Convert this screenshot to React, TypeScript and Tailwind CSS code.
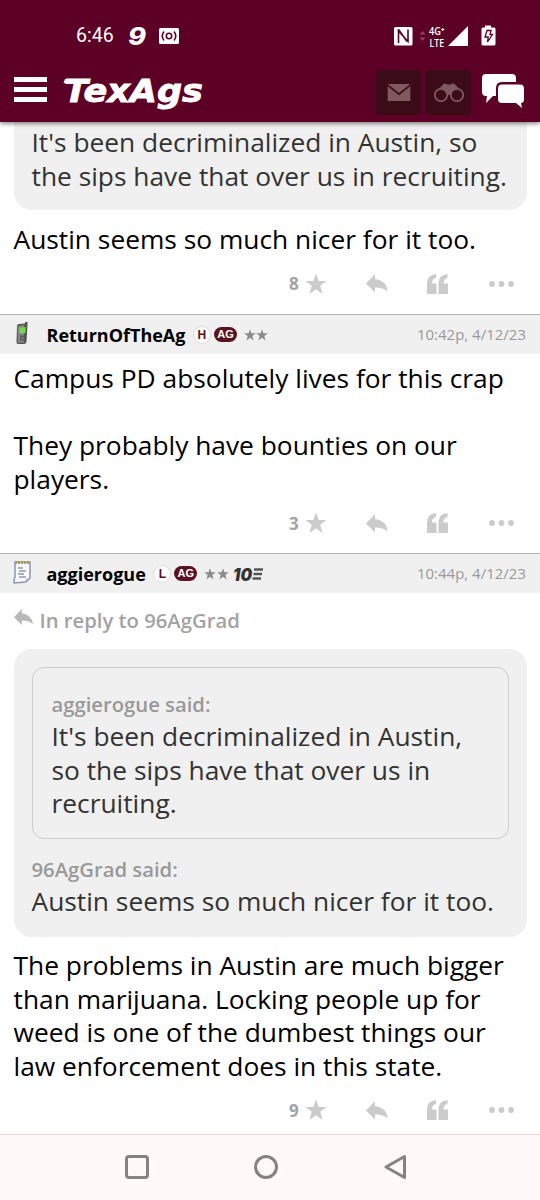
import type { ReactNode } from "react";

const postText = "text-[26.33px] leading-[33.5px] whitespace-nowrap";

function StatusBar() {
  return (
    <div className="flex h-[72px] items-center pl-[76px] pr-[44px] text-white">
      <span className="w-[53px] font-[Roboto] text-[19.5px] leading-none">6:46</span>
      <svg className="overflow-visible" width="20" height="30" viewBox="0 0 20 30">
        <text x="-1" y="23.5" fontSize="24" fontWeight="800" fontStyle="italic" fontFamily="Inter, sans-serif" fill="#fff" textLength="18" lengthAdjust="spacingAndGlyphs">9</text>
      </svg>
      <svg className="ml-[10px]" width="20" height="16" viewBox="0 0 20 16" fill="none" stroke="#5d0025" strokeWidth="1.6">
        <rect width="20" height="16" rx="1.5" fill="#fff" stroke="none" />
        <circle cx="10" cy="8" r="2.7" />
        <path d="M5 3.5Q1.4 8 5 12.5M15 3.5Q18.6 8 15 12.5" />
      </svg>
      <svg className="ml-auto overflow-visible" width="102" height="22" viewBox="0 0 102 22" fill="#fff">
        <rect x="0" y="2" width="18.5" height="18.5" rx="1.5" />
        <path d="M4.500 18V6L14 16.500V4.500M3.500 5H5L13 16.500" fill="none" stroke="#5d0025" strokeWidth="1.600" />
        <path d="M25.5 9.5L28.5 6L31.5 9.5ZM25.5 12.5L28.5 16L31.5 12.5Z" fill="#904060" />
        <text x="35" y="10" fontSize="10.5" fontWeight="600" fontFamily="Open Sans, sans-serif" textLength="12" lengthAdjust="spacingAndGlyphs">4G</text>
        <path d="M47.300 4.500H50.300M48.800 3V6" stroke="#fff" strokeWidth="1" />
        <text x="35.5" y="21.5" fontSize="10.5" fontWeight="600" fontFamily="Open Sans, sans-serif" textLength="14.5" lengthAdjust="spacingAndGlyphs">LTE</text>
        <path d="M54 21L74 1V21Z" />
        <path d="M87.500 4q0-1.500 1.500-1.500H91V.5h6v2h3q1.500 0 1.500 1.500V19q0 1.500-1.500 1.500H89Q87.500 20.500 87.500 19Z" />
        <path d="M93 5.500H97L96 9.500H98.500L93.500 17L94.200 12H91Z" fill="none" stroke="#5d0025" strokeWidth="1.300" />
      </svg>
    </div>
  );
}

function Header() {
  return (
    <header className="relative z-10 h-[122px] bg-[#5d0025] shadow-[0_1px_5px_rgba(0,0,0,0.6)]">
      <StatusBar />
      <div className="-mt-[2px] flex items-start pl-[14px] pr-[15px]">
        <div className="mt-[7px] flex w-[33px] flex-col gap-[5.5px]">
          <span className="h-[4.500px] bg-white" />
          <span className="h-[4.500px] bg-white" />
          <span className="h-[4.500px] bg-white" />
        </div>
        <svg className="ml-[15px]" width="145" height="44" viewBox="0 0 145 44">
          <text x="2" y="31.5" fontSize="31.5" fontWeight="700" fontStyle="italic" fontFamily="DejaVu Sans, sans-serif" fill="#fff" stroke="#fff" strokeWidth="0.800" textLength="139" lengthAdjust="spacingAndGlyphs">TexAgs</text>
          <path d="M3 9L1.500 13H4.500L6 9ZM26 9L25 14H22L23 9Z" fill="#fff" />
        </svg>
        <div className="ml-auto flex gap-[5px]">
          <div className="flex size-[45px] items-center justify-center rounded bg-[#3b0b18]">
            <svg width="24" height="17" viewBox="0 0 24 18" fill="#80595f">
              <path d="M0 0H24L12 9.500Z" />
              <path d="M0 2.500L12 12L24 2.500V18H0Z" />
            </svg>
          </div>
          <div className="flex size-[45px] items-center justify-center rounded bg-[#3b0b18]">
            <svg width="30" height="20" viewBox="0 0 30 20" fill="#80595f">
              <path d="M2 9L9 1.500Q11-.5 13 1.500H17Q19-.5 21 1.500L28 9L24 18L17 12H13L6 18Z" />
              <circle cx="7" cy="12" r="6.200" fill="#3b0b18" stroke="#80595f" strokeWidth="1.700" />
              <circle cx="23" cy="12" r="6.200" fill="#3b0b18" stroke="#80595f" strokeWidth="1.700" />
            </svg>
          </div>
        </div>
        <svg className="ml-[10px] mt-[3px]" width="44" height="36" viewBox="0 0 44 36" fill="#fff">
          <path d="M5 1H31Q35 1 35 5V9H21Q15 9 15 15V23H12L5 30L6 23H5Q1 23 1 19V5Q1 1 5 1Z" />
          <path d="M21 11.500H39Q43 11.500 43 15.500V26Q43 30 40 30L41 35L35 30H21Q17 30 17 26V15.500Q17 11.500 21 11.500Z" />
        </svg>
      </div>
    </header>
  );
}

function ReplyArrow({ width = 22 }: { width?: number }) {
  return (
    <svg width={width} height={(width * 19) / 22} viewBox="0 0 22 19" fill="currentColor">
      <path d="M0 9.500L9 0V5Q20 6 22 17.500Q16 13 9 13.500V18.500Z" />
    </svg>
  );
}

function Star({ size }: { size: number }) {
  return (
    <svg width={size} height={size} viewBox="0 0 22 22" fill="currentColor">
      <path d="M11 .5L13.600 8H21.500L15.200 12.700L17.600 21L11 16.200L4.400 21L6.800 12.700L.5 8H8.400Z" />
    </svg>
  );
}

function Actions({ count }: { count: number }) {
  return (
    <div className="flex h-[22px] items-center pl-[289px] text-[#cbcbcb]">
      <span className="w-[16px] text-[17px] leading-none font-bold text-[#a3a3a3]">{count}</span>
      <Star size={22} />
      <span className="ml-[39px]"><ReplyArrow /></span>
      <svg className="ml-[39px]" width="22" height="20" viewBox="0 0 22 20" fill="currentColor">
        <path d="M9 0V4Q5 4.500 5 9.500H9.500V20H0V9Q0 1 9 0ZM20.500 0V4Q16.500 4.500 16.500 9.500H21V20H11.500V9Q11.500 1 20.500 0Z" />
      </svg>
      <svg className="ml-[40px]" width="26" height="6" viewBox="0 0 26 6" fill="currentColor">
        <circle cx="3" cy="3" r="2.900" />
        <circle cx="12.500" cy="3" r="2.900" />
        <circle cx="22" cy="3" r="2.900" />
      </svg>
    </div>
  );
}

function PhoneIcon() {
  return (
    <svg width="20" height="24" viewBox="0 0 20 24">
      <path d="M4 5Q4 3 6 3L12 2.500V1H14.500V3L13.500 21Q13 23 11 23H5Q3.500 23 3.500 21Z" fill="#555" />
      <path d="M4.500 5L11 4V21.500L5 22Z" fill="#858585" />
      <path d="M6.500 6.500L12.500 6V12L6.500 12.500Z" fill="#72dc50" />
      <path d="M7 15.500H11.500M7 18.500H11.500" stroke="#555" strokeWidth="2" strokeDasharray="2 .5" />
    </svg>
  );
}

function NotepadIcon() {
  return (
    <svg width="20" height="24" viewBox="0 0 20 24">
      <path d="M2 2H17V18L13 22L1 23V20L2 17Z" fill="#f8faff" stroke="#8b93ba" strokeWidth="1.500" />
      <path d="M2 2.500H17" stroke="#b09a58" strokeWidth="3" strokeDasharray="2 1" />
      <path d="M5 8H10M6 11H13M5 14H11M6 17H13" stroke="#8c9da0" strokeWidth="1.300" />
      <path d="M12 23L13 19L17 18Z" fill="#aaa" />
    </svg>
  );
}

type PostHeaderProps = {
  icon: ReactNode;
  name: string;
  letter: string;
  time: string;
  ten?: boolean;
};

function PostHeader({ icon, name, letter, time, ten }: PostHeaderProps) {
  return (
    <div className="flex h-10 items-center border-t border-[#b3b3b3] bg-[#f0f0f0] pl-[13px] pr-[14px]">
      <span className="w-[33.5px] -mt-[4px]">{icon}</span>
      <span className="text-[18px] leading-none font-bold text-black">{name}</span>
      <span className="ml-[7.5px] flex size-[18px] items-center justify-center rounded-full border border-[#ddd] bg-white font-[Liberation_Sans] text-[12px] leading-none font-bold text-[#5b1220]">
        {letter}
      </span>
      <span className="ml-[3px] flex h-[15px] w-[23px] items-center justify-center rounded-full bg-[#5b1220] font-[Liberation_Sans] text-[11px] leading-none font-bold text-white">
        AG
      </span>
      <span className="ml-[7px] flex gap-[0.5px] text-[#8b8b8b]">
        <Star size={12} />
        <Star size={12} />
      </span>
      {ten ? (
        <svg className="ml-[4px] overflow-visible" width="31" height="20" viewBox="0 0 31 20">
          <text x="0" y="16.500" fontSize="17.500" fontWeight="900" fontStyle="italic" fontFamily="Inter, sans-serif" fill="#333" textLength="19" lengthAdjust="spacingAndGlyphs">10</text>
          <path d="M21 5.500H30M20.500 10H29M19.500 14.500H28" stroke="#555" strokeWidth="2.700" />
        </svg>
      ) : null}
      <span className="ml-auto text-[15px] leading-none text-[#999]">{time}</span>
    </div>
  );
}

function NavBar() {
  return (
    <nav className="h-[66px] border-t border-[#f1dbd6] bg-[#fffaf9] pl-[124px] pt-[19px]">
      <svg width="284" height="26" viewBox="0 0 284 26" fill="none" stroke="#858382" strokeWidth="3" strokeLinejoin="round">
        <rect x="2.500" y="2.500" width="21" height="21" rx="2.500" />
        <circle cx="142" cy="13" r="10.500" />
        <path d="M262 13L280.500 2.500V23.500Z" />
      </svg>
    </nav>
  );
}

export default function App() {
  return (
    <div className="h-[1200px] w-[540px] overflow-hidden bg-white font-['Open_Sans',sans-serif] text-black">
      <Header />
      <main className="h-[1012px]">
        <article className="h-[192px]">
          <div className={`mx-[13.5px] h-[88px] rounded-b-[18px] bg-[#f0f0f0] pl-[18px] pt-[4px] text-[#333] ${postText}`}>
            It's been decriminalized in Austin, so
            <br />
            the sips have that over us in recruiting.
          </div>
          <p className={`mt-[13px] mb-[16px] pl-[13.5px] ${postText}`}>Austin seems so much nicer for it too.</p>
          <Actions count={8} />
        </article>

        <article className="h-[239px]">
          <PostHeader icon={<PhoneIcon />} name="ReturnOfTheAg" letter="H" time="10:42p, 4/12/23" />
          <p className={`mt-[8px] mb-[16px] pl-[13.5px] ${postText}`}>
            Campus PD absolutely lives for this crap
            <br />
            <br />
            They probably have bounties on our
            <br />
            players.
          </p>
          <Actions count={3} />
        </article>

        <article>
          <PostHeader icon={<NotepadIcon />} name="aggierogue" letter="L" time="10:44p, 4/12/23" ten />
          <div className="mt-[15px] flex h-6 items-center gap-[7px] pl-[13.5px] text-[20.25px] leading-6 font-semibold text-[#a3a3a3]">
            <span className="-mt-[6px] text-[#b8b8b8]"><ReplyArrow width={19} /></span>
            In reply to 96AgGrad
          </div>
          <div className="mx-[13.5px] mt-[17px] h-[288px] rounded-[18px] bg-[#f0f0f0] px-[18px] pt-[18px] text-[#333]">
            <div className="h-[172px] rounded-[12px] border border-[#ccc] pl-[19px] pt-[23px]">
              <p className="mb-[3px] text-[20.25px] leading-[26px] font-semibold text-[#999]">aggierogue said:</p>
              <p className={postText}>
                It's been decriminalized in Austin,
                <br />
                so the sips have that over us in
                <br />
                recruiting.
              </p>
            </div>
            <p className="mt-[17px] mb-[3px] text-[20.25px] leading-[26px] font-semibold text-[#999]">96AgGrad said:</p>
            <p className={postText}>Austin seems so much nicer for it too.</p>
          </div>
          <p className={`mt-[12px] mb-[16px] pl-[13.5px] ${postText}`}>
            The problems in Austin are much bigger
            <br />
            than marijuana. Locking people up for
            <br />
            weed is one of the dumbest things our
            <br />
            law enforcement does in this state.
          </p>
          <Actions count={9} />
        </article>
      </main>
      <NavBar />
    </div>
  );
}
